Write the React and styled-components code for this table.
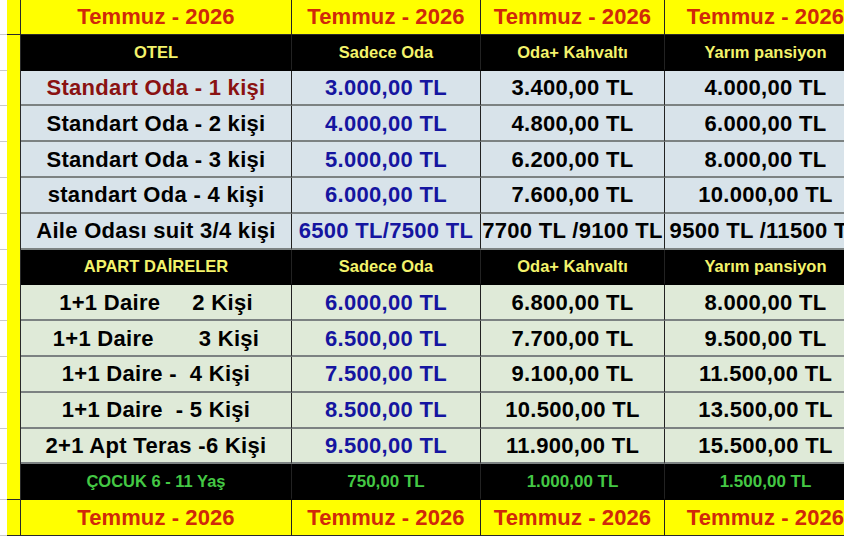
import React from 'react';
import styled, { createGlobalStyle } from 'styled-components';

const GlobalStyle = createGlobalStyle`
  html, body {
    margin: 0;
    padding: 0;
    background: #ffffff;
    overflow: hidden;
  }
  body {
    font-family: "Liberation Sans", Arial, sans-serif;
  }
`;

const bg = {
  yellow: '#ffff00',
  black: '#000000',
  blue: '#d8e3ea',
  green: '#dfead8',
};

const Sheet = styled.div`
  display: flex;
  flex-direction: column;
  width: 900px;
  margin-top: -1px;
`;

const Row = styled.div`
  display: grid;
  grid-template-columns: 7px 14px 271px 189px 184px 202px;
  height: 35.8px;
`;

const Gutter = styled.div`
  background: #ffffff;
  border-bottom: 1px solid #c9c9c9;
`;

const Strip = styled.div`
  background: #ffff00;
  border-right: 1px solid #2a2a2a;
  border-bottom: ${(p) => (p.$line ? '1px solid #2a2a2a' : 'none')};
`;

const Cell = styled.div`
  display: flex;
  align-items: center;
  justify-content: center;
  overflow: hidden;
  white-space: pre;
  box-sizing: border-box;
  background: ${(p) => bg[p.$bg]};
  border-right: 1px solid #222;
  border-bottom: ${(p) =>
    p.$bg === 'black' ? '2px solid #000' : p.$bg === 'yellow' ? '1px solid #2a2a2a' : '2px solid #7c8282'};
  color: ${(p) => p.$color || '#000'};
  font-size: ${(p) => p.$size || 22}px;
  font-weight: bold;
  letter-spacing: ${(p) => (p.$spacing === undefined ? 0.3 : p.$spacing)}px;
  padding-top: 1px;
`;

const C = {
  red: '#d0290a',
  darkRed: '#8a1212',
  blue: '#1515a0',
  yellow: '#f4f36b',
  green: '#44c844',
};

const TitleRow = () => (
  <Row>
    <Gutter />
    <Strip $line />
    {[0, 1, 2, 3].map((i) => (
      <Cell key={i} $bg="yellow" $color={C.red} $spacing={0.1}>
        Temmuz - 2026
      </Cell>
    ))}
  </Row>
);

const HeadRow = ({ label }) => (
  <Row>
    <Gutter />
    <Strip />
    <Cell $bg="black" $color={C.yellow} $size={16.5} $spacing={0}>{label}</Cell>
    <Cell $bg="black" $color={C.yellow} $size={16.5} $spacing={0}>Sadece Oda</Cell>
    <Cell $bg="black" $color={C.yellow} $size={16.5} $spacing={0}>Oda+ Kahvaltı</Cell>
    <Cell $bg="black" $color={C.yellow} $size={16.5} $spacing={0}>Yarım pansiyon</Cell>
  </Row>
);

const PriceRow = ({ tone, label, labelColor, prices }) => (
  <Row>
    <Gutter />
    <Strip />
    <Cell $bg={tone} $color={labelColor}>{label}</Cell>
    <Cell $bg={tone} $color={C.blue}>{prices[0]}</Cell>
    <Cell $bg={tone}>{prices[1]}</Cell>
    <Cell $bg={tone}>{prices[2]}</Cell>
  </Row>
);

const hotel = [
  { label: 'Standart Oda - 1 kişi', color: C.darkRed, prices: ['3.000,00 TL', '3.400,00 TL', '4.000,00 TL'] },
  { label: 'Standart Oda - 2 kişi', prices: ['4.000,00 TL', '4.800,00 TL', '6.000,00 TL'] },
  { label: 'Standart Oda - 3 kişi', prices: ['5.000,00 TL', '6.200,00 TL', '8.000,00 TL'] },
  { label: 'standart Oda - 4 kişi', prices: ['6.000,00 TL', '7.600,00 TL', '10.000,00 TL'] },
  { label: 'Aile Odası suit 3/4 kişi', prices: ['6500 TL/7500 TL', '7700 TL /9100 TL', '9500 TL /11500 TL'] },
];

const apart = [
  { label: '1+1 Daire     2 Kişi', prices: ['6.000,00 TL', '6.800,00 TL', '8.000,00 TL'] },
  { label: '1+1 Daire       3 Kişi', prices: ['6.500,00 TL', '7.700,00 TL', '9.500,00 TL'] },
  { label: '1+1 Daire -  4 Kişi', prices: ['7.500,00 TL', '9.100,00 TL', '11.500,00 TL'] },
  { label: '1+1 Daire  - 5 Kişi', prices: ['8.500,00 TL', '10.500,00 TL', '13.500,00 TL'] },
  { label: '2+1 Apt Teras -6 Kişi', prices: ['9.500,00 TL', '11.900,00 TL', '15.500,00 TL'] },
];

const ChildRow = () => (
  <Row>
    <Gutter />
    <Strip $line />
    <Cell $bg="black" $color={C.green} $size={16.5} $spacing={0}>ÇOCUK 6 - 11 Yaş</Cell>
    <Cell $bg="black" $color={C.green} $size={17} $spacing={0}>750,00 TL</Cell>
    <Cell $bg="black" $color={C.green} $size={17} $spacing={0}>1.000,00 TL</Cell>
    <Cell $bg="black" $color={C.green} $size={17} $spacing={0}>1.500,00 TL</Cell>
  </Row>
);

export default function App() {
  return (
    <>
      <GlobalStyle />
      <Sheet>
        <TitleRow />
        <HeadRow label="OTEL" />
        {hotel.map((r) => (
          <PriceRow key={r.label} tone="blue" label={r.label} labelColor={r.color} prices={r.prices} />
        ))}
        <HeadRow label="APART DAİRELER" />
        {apart.map((r) => (
          <PriceRow key={r.label} tone="green" label={r.label} prices={r.prices} />
        ))}
        <ChildRow />
        <TitleRow />
      </Sheet>
    </>
  );
}
